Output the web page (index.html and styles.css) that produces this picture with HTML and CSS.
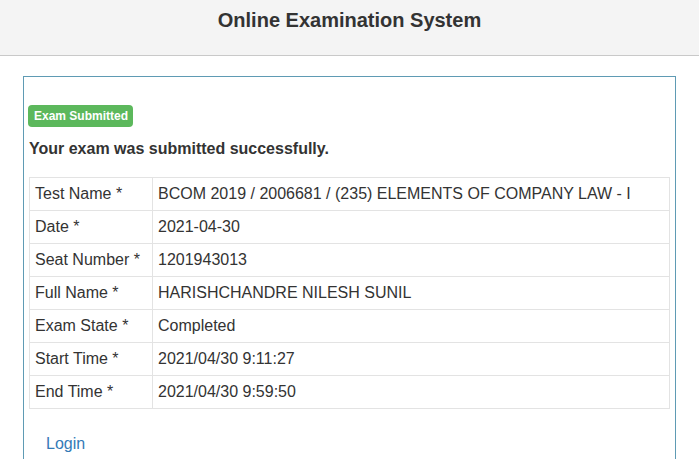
FILE: index.html
```html
<!DOCTYPE html>
<html>
<head>
<meta charset="utf-8">
<title>Online Examination System</title>
<link rel="stylesheet" href="styles.css">
</head>
<body>
<header class="topbar">
  <h1 class="title">Online Examination System</h1>
</header>
<main class="panel">
  <span class="badge">Exam Submitted</span>
  <h2 class="message">Your exam was submitted successfully.</h2>
  <table class="details">
    <tr><td class="key">Test Name *</td><td>BCOM 2019 / 2006681 / (235) ELEMENTS OF COMPANY LAW - I</td></tr>
    <tr><td class="key">Date *</td><td>2021-04-30</td></tr>
    <tr><td class="key">Seat Number *</td><td>1201943013</td></tr>
    <tr><td class="key">Full Name *</td><td>HARISHCHANDRE NILESH SUNIL</td></tr>
    <tr><td class="key">Exam State *</td><td>Completed</td></tr>
    <tr><td class="key">Start Time *</td><td>2021/04/30 9:11:27</td></tr>
    <tr><td class="key">End Time *</td><td>2021/04/30 9:59:50</td></tr>
  </table>
  <a class="login" href="#">Login</a>
</main>
</body>
</html>
```
FILE: styles.css
```css
* { box-sizing: border-box; }
html, body {
  margin: 0;
  padding: 0;
  background: #fff;
  font-family: "Liberation Sans", Arial, sans-serif;
  color: #333;
  font-size: 16px;
}
.topbar {
  height: 56px;
  background: #f4f4f4;
  border-bottom: 1px solid #c9c9c9;
  padding-top: 9px;
  text-align: center;
}
.title {
  margin: 0;
  font-size: 20px;
  line-height: 23px;
  font-weight: bold;
  color: #333;
}
.panel {
  display: block;
  margin: 20px 23px 0;
  border: 1px solid #5f9bb4;
  padding: 28px 5px 40px;
  min-height: 500px;
}
.badge {
  display: inline-block;
  margin-left: -1px;
  background: #5cb85c;
  color: #fff;
  font-size: 12px;
  font-weight: bold;
  line-height: 14px;
  padding: 4px 5px 4px 6px;
  border-radius: 4px;
}
.message {
  margin: 11px 0 17px;
  font-size: 16px;
  line-height: 22px;
  font-weight: bold;
  color: #333;
}
.details {
  width: 100%;
  border-collapse: collapse;
}
.details td {
  border: 1px solid #e3e3e3;
  padding: 5px;
  line-height: 22px;
  font-size: 16px;
  color: #333;
  vertical-align: top;
  white-space: nowrap;
}
.details td.key {
  width: 123px;
}
.login {
  display: inline-block;
  margin: 24px 0 0 17px;
  line-height: 22px;
  color: #337ab7;
  text-decoration: none;
}
```
